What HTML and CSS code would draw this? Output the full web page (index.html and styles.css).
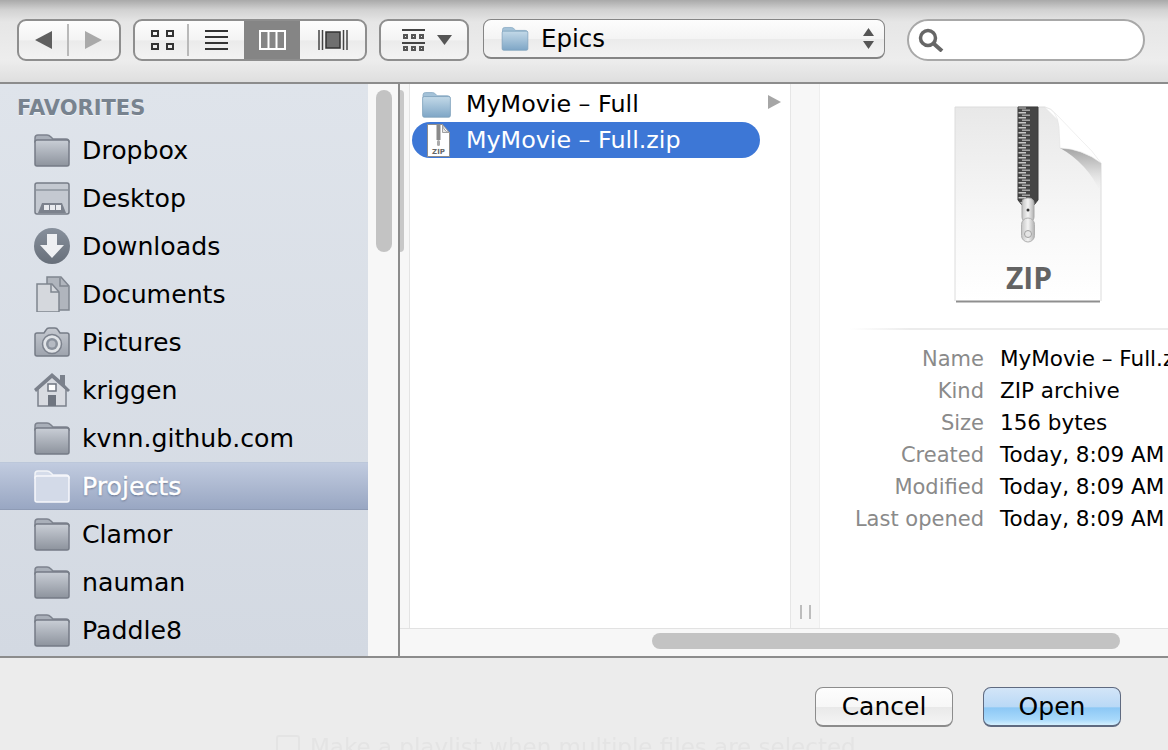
FILE: index.html
```html
<!doctype html>
<html lang="en">
    <head>
        <title>Open</title>
        <link rel="stylesheet" href="styles.css">
    </head>
    <body>
        <svg class="defs" width="0" height="0">
            <defs>
                <linearGradient id="greyFill" x1="0" y1="0" x2="0" y2="1">
                    <stop offset="0" stop-color="#c9ced6" />
                    <stop offset="1" stop-color="#8d939d" />
                </linearGradient>
                <linearGradient id="blueFill" x1="0" y1="0" x2="0" y2="1">
                    <stop offset="0" stop-color="#c3d9e8" />
                    <stop offset="1" stop-color="#7ea6c6" />
                </linearGradient>
                <linearGradient id="darkFill" x1="0" y1="0" x2="0" y2="1">
                    <stop offset="0" stop-color="#87909c" />
                    <stop offset="1" stop-color="#676f7a" />
                </linearGradient>
                <linearGradient id="camFill" x1="0" y1="0" x2="0" y2="1">
                    <stop offset="0" stop-color="#c6cad1" />
                    <stop offset="1" stop-color="#9da3ad" />
                </linearGradient>
                <linearGradient id="pageFill" x1="0" y1="0" x2="0" y2="1">
                    <stop offset="0" stop-color="#e8e8e8" />
                    <stop offset=".6" stop-color="#f8f8f8" />
                    <stop offset="1" stop-color="#ffffff" />
                </linearGradient>
                <linearGradient id="foldShade" x1="0" y1="0" x2="0" y2="1">
                    <stop offset="0" stop-color="#a4a4a4" />
                    <stop offset=".45" stop-color="#d2d2d2" />
                    <stop offset="1" stop-color="#f1f1f1" stop-opacity="0" />
                </linearGradient>
                <linearGradient id="pullFill" x1="0" y1="0" x2="1" y2="0">
                    <stop offset="0" stop-color="#c4c4c4" />
                    <stop offset=".5" stop-color="#f4f4f4" />
                    <stop offset="1" stop-color="#b0b0b0" />
                </linearGradient>
                <pattern id="teeth" width="20" height="5" patternUnits="userSpaceOnUse">
                    <rect width="20" height="5" fill="#454545" />
                    <rect x="4" y="1" width="8" height="1.500" fill="#c9c9c9" />
                    <rect x="8" y="3.500" width="8" height="1.500" fill="#a4a4a4" />
                </pattern>
                <symbol id="folder" viewBox="0 0 36 34">
                    <path d="M1 9V5q0-3 3-3h9q2 0 4 2l2 2h13q3 0 3 3z" fill="#a9afb9" stroke="#7d838e" stroke-width="1.5" />
                    <rect x="1" y="7" width="34" height="26" rx="2" fill="url(#greyFill)" stroke="#757b86" stroke-width="1.5" />
                </symbol>
                <symbol id="folderWhite" viewBox="0 0 36 34">
                    <path d="M1 9V5q0-3 3-3h9q2 0 4 2l2 2h13q3 0 3 3z" fill="#d5dcea" stroke="#f2f4f8" stroke-width="1.5" />
                    <rect x="1" y="7" width="34" height="26" rx="2" fill="#d3dae8" stroke="#f7f8fb" stroke-width="1.5" />
                </symbol>
                <symbol id="folderBlue" viewBox="0 0 36 34">
                    <path d="M1 9V5q0-3 3-3h9q2 0 4 2l2 2h13q3 0 3 3z" fill="#a4c2d8" stroke="#86a8c2" stroke-width="1" />
                    <rect x=".5" y="7" width="35" height="26" rx="2" fill="url(#blueFill)" stroke="#7c9fba" stroke-width="1" />
                </symbol>
                <symbol id="smallZip" viewBox="0 0 23 33">
                    <path d="M.5.5h15l7 8v24H.5z" fill="#fff" stroke="#8d8d8d" />
                    <path d="M15.500.5q1 7 7 8h-7z" fill="#e6e6e6" stroke="#a0a0a0" />
                    <rect x="9.500" y="1" width="4" height="15" fill="#8a8a8a" />
                    <rect x="10" y="16" width="3" height="6" rx="1.500" fill="#aaa" />
                    <text class="zip-tiny" x="11.500" y="30" text-anchor="middle">ZIP</text>
                </symbol>
            </defs>
        </svg>

        <div class="dialog">
            <div class="toolbar">
                <div class="btn nav">
                    <span class="seg seg-nav seg-rule">
                        <svg width="18" height="18" viewBox="0 0 18 18"><path d="M0 9 17 0v18z" fill="#5f5f5f" /></svg>
                    </span>
                    <span class="seg seg-nav">
                        <svg width="18" height="18" viewBox="0 0 18 18"><path d="M0 0 17 9 0 18z" fill="#a9a9a9" /></svg>
                    </span>
                </div>
                <div class="btn views">
                    <span class="seg seg-icon seg-rule">
                        <svg width="23" height="20" viewBox="0 0 23 20" fill="none" stroke="#333" stroke-width="2"><rect x="1" y="1" width="6" height="5" /><rect x="16" y="1" width="6" height="5" /><rect x="1" y="14" width="6" height="5" /><rect x="16" y="14" width="6" height="5" /></svg>
                    </span>
                    <span class="seg seg-list">
                        <svg width="23" height="20" viewBox="0 0 23 20" fill="#333"><rect y="0" width="23" height="2" /><rect y="6" width="23" height="2" /><rect y="12" width="23" height="2" /><rect y="18" width="23" height="2" /></svg>
                    </span>
                    <span class="seg seg-active">
                        <svg width="27" height="20" viewBox="0 0 27 20" fill="none" stroke="#fff" stroke-width="2"><rect x="1" y="1" width="25" height="18" /><path d="M9.500 1v18M17.500 1v18" /></svg>
                    </span>
                    <span class="seg seg-flow">
                        <svg width="30" height="20" viewBox="0 0 30 20"><path d="M1 0v20M4.500 0v20M25.500 0v20M29 0v20" stroke="#444" stroke-width="1.500" /><rect x="8" y="2" width="14" height="16" fill="#6f6f6f" stroke="#333" stroke-width="1.500" /></svg>
                    </span>
                </div>
                <div class="btn arrange">
                    <svg width="23" height="23" viewBox="0 0 23 23" fill="#444"><rect width="23" height="2" /><rect y="13" width="23" height="2" /><path d="M1 5h5v5H1zm8 0h5v5H9zm8 0h5v5h-5zM1 17h5v5H1zm8 0h5v5H9zm8 0h5v5h-5z" fill="#555" /><path d="M3 7h1v1H3zm8 0h1v1h-1zm8 0h1v1h-1zM3 19h1v1H3zm8 0h1v1h-1zm8 0h1v1h-1z" fill="#eee" /></svg>
                    <svg width="15" height="10" viewBox="0 0 15 10"><path d="M0 0h15L7.500 10z" fill="#555" /></svg>
                </div>
                <div class="btn path">
                    <svg class="path-icon" width="32" height="25"><use href="#folderBlue" /></svg>
                    <span class="path-name">Epics</span>
                    <svg width="11" height="21" viewBox="0 0 11 21" fill="#555"><path d="M5.500 0 11 8H0zM0 13h11l-5.500 8z" /></svg>
                </div>
                <div class="search">
                    <svg width="27" height="24" viewBox="0 0 27 24" fill="none" stroke="#666"><circle cx="10" cy="10" r="7.500" stroke-width="3.500" /><path d="m15 15 9 8" stroke-width="4" /></svg>
                </div>
            </div>

            <div class="browser">
                <div class="sidebar">
                    <div class="sidebar-title">FAVORITES</div>
                    <div class="side-row">
                        <svg class="side-icon"><use href="#folder" /></svg>Dropbox
                    </div>
                    <div class="side-row">
                        <svg class="side-icon" viewBox="0 0 36 34">
                            <rect x="1" y="2" width="34" height="31" rx="2" fill="#c4c9d1" stroke="#767c87" stroke-width="1.500" />
                            <path d="M2 9h32" stroke="#8e949e" stroke-width="1.500" />
                            <path d="M4 32 8 22h20l4 10z" fill="#7c828d" />
                            <path d="M10 24h5v5h-5zm6 0h5v5h-5zm6 0h5v5h-5z" fill="#e9ebef" />
                        </svg>Desktop
                    </div>
                    <div class="side-row">
                        <svg class="side-icon" viewBox="0 0 36 36">
                            <circle cx="18" cy="18" r="18" fill="url(#darkFill)" />
                            <path d="M13 6h10v11h7L18 30 6 17h7z" fill="#eef0f3" />
                        </svg>Downloads
                    </div>
                    <div class="side-row">
                        <svg class="side-icon" viewBox="0 0 36 36">
                            <path d="M13 1h14l8 9v24H13z" fill="#b0b5bd" stroke="#7f858f" stroke-width="1.500" />
                            <path d="M3 8h15l7 8v20H3z" fill="#d5d8dd" stroke="#7f858f" stroke-width="1.500" />
                            <path d="M17 8v8h8M26 2v8h8" fill="none" stroke="#7f858f" stroke-width="1.500" />
                        </svg>Documents
                    </div>
                    <div class="side-row">
                        <svg class="side-icon" viewBox="0 0 36 30">
                            <path d="M3 6h7l2-3q1-2 3-2h6q2 0 3 2l2 3h7q2 0 2 2v19q0 2-2 2H3q-2 0-2-2V8q0-2 2-2z" fill="url(#camFill)" stroke="#767c87" stroke-width="1.500" />
                            <circle cx="18" cy="17" r="9.500" fill="#e1e4e8" stroke="#7c828d" stroke-width="1.500" />
                            <circle cx="18" cy="17" r="6" fill="#8a919c" />
                            <circle cx="18" cy="17" r="3.500" fill="#b5bac3" />
                        </svg>Pictures
                    </div>
                    <div class="side-row">
                        <svg class="side-icon" viewBox="0 0 36 36">
                            <path d="M4 34V17L18 4l14 13v17z" fill="#d8dbe1" stroke="#7b818c" stroke-width="1.500" />
                            <path d="M0 17 18 1l8 7V3h5v10l5 5-2 2L18 6 2 20z" fill="#7b818c" />
                            <rect x="14" y="12" width="8" height="7" fill="#fff" stroke="#6f7580" stroke-width="1.500" />
                            <rect x="14" y="23" width="8" height="11" fill="#6f7580" />
                        </svg>kriggen
                    </div>
                    <div class="side-row">
                        <svg class="side-icon"><use href="#folder" /></svg>kvnn.github.com
                    </div>
                    <div class="side-row side-selected">
                        <svg class="side-icon"><use href="#folderWhite" /></svg>Projects
                    </div>
                    <div class="side-row">
                        <svg class="side-icon"><use href="#folder" /></svg>Clamor
                    </div>
                    <div class="side-row">
                        <svg class="side-icon"><use href="#folder" /></svg>nauman
                    </div>
                    <div class="side-row">
                        <svg class="side-icon"><use href="#folder" /></svg>Paddle8
                    </div>
                </div>
                <div class="side-scroll"><div class="side-thumb"></div></div>

                <div class="content">
                    <div class="panes">
                        <div class="peek"><div class="peek-thumb"></div></div>
                        <div class="column">
                            <div class="file-row">
                                <svg class="file-icon" width="33" height="27"><use href="#folderBlue" /></svg>
                                <span class="file-name">MyMovie – Full</span>
                                <svg class="file-arrow" width="13" height="14" viewBox="0 0 13 14"><path d="M0 0 13 7 0 14z" fill="#a6a6a6" /></svg>
                            </div>
                            <div class="file-row file-selected">
                                <svg class="file-icon" width="23" height="33"><use href="#smallZip" /></svg>
                                <span class="file-name">MyMovie – Full.zip</span>
                            </div>
                        </div>
                        <div class="gutter"><div class="grip"></div></div>
                        <div class="preview">
                            <svg class="zip-big" width="150" height="198" viewBox="0 0 150 198">
                                <path d="M1 1h90l56 56v138H1z" fill="url(#pageFill)" />
                                <path d="M1 195V1h90M147 57v138" fill="none" stroke="#dcdcdc" />
                                <path d="M2 195.500h144" stroke="#8f8f8f" stroke-width="2" />
                                <path d="M106 42q22 1 41 15v30q-14-30-41-45z" fill="url(#foldShade)" />
                                <path d="M91 1q12 2 14 20l1 21q23 1 41 15-8-12-20-23L103 9q-6-7-12-8z" fill="#fff" stroke="#dedede" stroke-width=".500" />
                                <path d="M64 1h20v93l-4 5H68l-4-5z" fill="url(#teeth)" stroke="#3a3a3a" />
                                <rect x="68" y="92" width="12" height="24" rx="5" fill="url(#pullFill)" stroke="#a8a8a8" />
                                <circle cx="74" cy="104" r="1.500" fill="#333" />
                                <rect x="67.500" y="112" width="13" height="24" rx="6.500" fill="url(#pullFill)" stroke="#b0b0b0" />
                                <circle cx="74" cy="128" r="3.500" fill="#e5e5e5" stroke="#a0a0a0" />
                                <text class="zip-label" x="75" y="183" text-anchor="middle">ZIP</text>
                            </svg>
                            <div class="preview-rule"></div>
                            <div class="info">
                                <span class="info-key">Name</span><span class="info-val">MyMovie – Full.zip</span>
                                <span class="info-key">Kind</span><span class="info-val">ZIP archive</span>
                                <span class="info-key">Size</span><span class="info-val">156 bytes</span>
                                <span class="info-key">Created</span><span class="info-val">Today, 8:09 AM</span>
                                <span class="info-key">Modified</span><span class="info-val">Today, 8:09 AM</span>
                                <span class="info-key">Last opened</span><span class="info-val">Today, 8:09 AM</span>
                            </div>
                        </div>
                    </div>
                    <div class="hscroll"><div class="hthumb"></div></div>
                </div>
            </div>

            <div class="footer">
                <div class="actions">
                    <button class="action">Cancel</button>
                    <button class="action action-default">Open</button>
                </div>
                <div class="playlist">
                    <span class="playlist-box"></span>
                    <span>Make a playlist when multiple files are selected</span>
                </div>
            </div>
        </div>
    </body>
</html>
```

FILE: styles.css
```css
html,
body {
    margin: 0;
    padding: 0;
    height: 100%;
    overflow: hidden;
}
body {
    font-family: "DejaVu Sans", sans-serif;
    color: #000;
    background: #ececec;
}
svg {
    display: block;
    flex: none;
}
.defs {
    position: absolute;
}
.dialog {
    display: flex;
    flex-direction: column;
    height: 750px;
    overflow: hidden;
}

/* Toolbar */
.toolbar {
    display: flex;
    align-items: flex-start;
    gap: 12px;
    height: 63px;
    padding: 19px 23px 0 17px;
    border-bottom: 2px solid #8c8c8c;
    background: linear-gradient(#a9a9a9 0, #d2d2d2 10px, #e6e6e6 22px, #ededed 60px, #dedede 83px);
}
.btn {
    display: flex;
    align-items: center;
    box-sizing: border-box;
    height: 42px;
    border: 2px solid #8e8e8e;
    border-radius: 9px;
    overflow: hidden;
    background: linear-gradient(#fdfdfd, #f4f4f4 50%, #ebebeb 52%, #f3f3f3);
}
.nav {
    width: 104px;
}
.views {
    width: 234px;
}
.arrange {
    width: 90px;
    margin-right: 2px;
    padding: 0 15px 0 21px;
    justify-content: space-between;
}
.path {
    width: 402px;
    height: 40px;
    padding: 0 10px 0 15px;
    border-radius: 8px;
    border-width: 1px;
    border-color: #858585;
    border-bottom-width: 2px;
}
.path-name {
    flex: 1;
    margin-left: 10px;
    font-size: 24.500px;
}
.seg {
    display: flex;
    align-items: center;
    justify-content: center;
    height: 100%;
    position: relative;
}
.seg-nav {
    width: 50px;
}
.seg-icon {
    width: 54px;
}
.seg-list {
    width: 55px;
}
.seg-active {
    width: 56px;
    background: #858585;
}
.seg-flow {
    flex: 1;
}
.seg-rule::after {
    content: "";
    position: absolute;
    right: 0;
    top: 3px;
    bottom: 3px;
    width: 2px;
    background: #b9b9b9;
}
.search {
    display: flex;
    align-items: center;
    box-sizing: border-box;
    width: 238px;
    height: 42px;
    margin-left: 10px;
    padding-left: 9px;
    border: 2px solid #a8a8a8;
    border-radius: 21px;
    background: #fff;
}

/* Sidebar */
.browser {
    display: flex;
    height: 572px;
    overflow: hidden;
}
.sidebar {
    width: 368px;
    flex: none;
    background: linear-gradient(#dfe4eb, #d3d9e2);
}
.sidebar-title {
    height: 42px;
    padding-left: 17px;
    line-height: 49px;
    font-size: 21px;
    font-weight: bold;
    color: #78838f;
    text-shadow: 0 1px 0 #f2f4f7;
}
.side-row {
    display: flex;
    align-items: center;
    height: 48px;
    padding-left: 34px;
    font-size: 25.200px;
}
.side-icon {
    width: 36px;
    height: 36px;
    margin-right: 12px;
}
.side-selected {
    color: #fff;
    -webkit-text-stroke: .4px #fff;
    text-shadow: 0 1px 2px #5c6a86;
    background: linear-gradient(#c2cce0, #98a6c2);
    box-shadow: inset 0 1px 0 #bcc7da, inset 0 -1px 0 #8e9bb5;
}
.side-scroll {
    width: 30px;
    flex: none;
    box-sizing: border-box;
    padding: 6px 6px 0 8px;
    background: #f7f7f7;
}
.side-thumb {
    width: 16px;
    height: 162px;
    border-radius: 8px;
    background: #c3c3c3;
}

/* Columns */
.content {
    flex: 1;
    min-width: 0;
    display: flex;
    flex-direction: column;
    border-left: 2px solid #8c8c8c;
    background: #fff;
}
.panes {
    flex: 1;
    display: flex;
    min-height: 0;
}
.peek {
    width: 10px;
    flex: none;
    box-sizing: border-box;
    background: #f7f7f7;
    border-right: 1px solid #e4e4e4;
}
.peek-thumb {
    width: 4px;
    height: 162px;
    margin-top: 6px;
    border-radius: 0 4px 4px 0;
    background: #c8c8c8;
}
.column {
    width: 380px;
    flex: none;
    padding-top: 2px;
}
.file-row {
    display: flex;
    align-items: center;
    box-sizing: border-box;
    width: 348px;
    height: 36px;
    margin-left: 2px;
    padding-left: 8px;
    position: relative;
    font-size: 23.800px;
}
.file-icon {
    margin-right: 13px;
}
.file-selected {
    padding-left: 15px;
    color: #fff;
    background: #3d77d6;
    border-radius: 18px;
}
.file-selected .file-icon {
    margin-right: 16px;
}
.file-arrow {
    position: absolute;
    left: 356px;
    top: 9px;
}
.zip-tiny {
    font-size: 7px;
    font-weight: bold;
    fill: #666;
}
.gutter {
    width: 30px;
    flex: none;
    display: flex;
    flex-direction: column;
    justify-content: flex-end;
    align-items: center;
    box-sizing: border-box;
    background: #f7f7f7;
    border-left: 1px solid #e6e6e6;
    border-right: 1px solid #eeeeee;
}
.grip {
    width: 7px;
    height: 14px;
    margin-bottom: 9px;
    border-left: 2px solid #bdbdbd;
    border-right: 2px solid #bdbdbd;
}

/* Preview */
.preview {
    flex: 1;
    min-width: 0;
    overflow: hidden;
}
.zip-big {
    margin: 22px 0 0 134px;
}
.zip-label {
    font-family: "Open Sans", sans-serif;
    font-size: 30px;
    font-weight: 700;
    fill: #636363;
}
.preview-rule {
    height: 2px;
    margin: 24px 0 0 30px;
    background: linear-gradient(90deg, #fff, #ececec 60px);
}
.info {
    display: grid;
    grid-template-columns: 164px max-content;
    column-gap: 16px;
    grid-auto-rows: 32px;
    margin-top: 13px;
    font-size: 21.500px;
    line-height: 32px;
    white-space: nowrap;
}
.info-key {
    text-align: right;
    font-size: 21px;
    color: #8a8a8a;
}

/* Scrollbar under the columns */
.hscroll {
    flex: none;
    height: 28px;
    box-sizing: border-box;
    padding: 4px 48px 0 252px;
    background: #f7f7f7;
    border-top: 1px solid #e2e2e2;
}
.hthumb {
    height: 16px;
    border-radius: 8px;
    background: #c3c3c3;
}

/* Footer */
.footer {
    flex: 1;
    min-height: 0;
    overflow: hidden;
    border-top: 2px solid #8c8c8c;
    background: #ececec;
}
.actions {
    display: flex;
    justify-content: flex-end;
    gap: 30px;
    padding: 29px 47px 0 0;
}
.action {
    width: 138px;
    height: 40px;
    padding: 0;
    border: 1px solid #8c8c8c;
    border-bottom-width: 2px;
    border-radius: 8px;
    font-family: inherit;
    font-size: 25px;
    color: #000;
    background: linear-gradient(#fdfdfd, #f7f7f7 50%, #e9e9e9 52%, #f5f5f5);
}
.action-default {
    border-color: #5f6a80;
    background: linear-gradient(#d3e5f8, #bad9f6 50%, #8cc8f5 54%, #a8d9fb 85%, #d5f0fe);
}
.playlist {
    display: flex;
    align-items: center;
    gap: 10px;
    margin: 7px 0 0 276px;
    font-size: 23px;
    white-space: nowrap;
    color: #e4e4e4;
    filter: blur(.6px);
}
.playlist-box {
    width: 20px;
    height: 20px;
    border: 2px solid #e4e4e4;
    border-radius: 3px;
}
```
